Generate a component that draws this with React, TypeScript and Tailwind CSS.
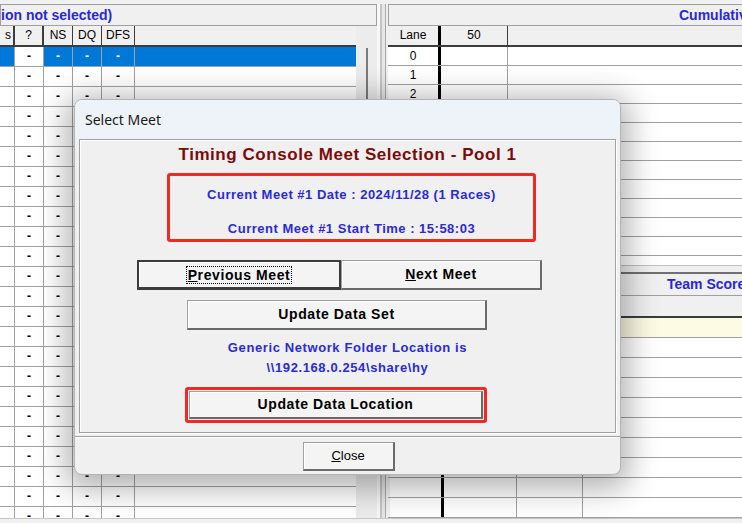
import React from "react"

const sans = "font-['Liberation_Sans',Arial,sans-serif]"

const leftRows = Array.from({ length: 24 }, (_, i) => i)
const laneRows = Array.from({ length: 12 }, (_, i) => i)
const teamRows = Array.from({ length: 9 }, (_, i) => i)

function Btn({
  children,
  def,
  className = "",
}: {
  children: React.ReactNode
  def?: boolean
  className?: string
}) {
  return (
    <div
      className={
        "flex items-center justify-center bg-[#f4f4f4] text-[14px] font-bold tracking-[0.6px] text-black " +
        (def
          ? "border-2 border-[#3c3c3c] border-b-[3px] shadow-[inset_1px_1px_0_#fff] "
          : "border border-[#a0a0a0] border-b-2 border-r-2 border-b-[#6a6a6a] border-r-[#6a6a6a] shadow-[inset_1px_1px_0_#fff] ") +
        className
      }
    >
      {children}
    </div>
  )
}

export default function App() {
  return (
    <div className={`relative w-[742px] h-[523px] overflow-hidden bg-[#f0f0f0] ${sans}`}>
      <div className="flex h-[518px] pt-[4px]">
        {/* left panel */}
        <div className="w-[377px] shrink-0 flex flex-col">
          <div className="h-[22px] border border-[#a0a0a0] bg-[#f0f0f0] text-[14px] font-bold text-[#2828d8] leading-[20px] whitespace-nowrap overflow-hidden">
            ion not selected)
          </div>
          <div className="flex flex-1 overflow-hidden">
            <div className="w-[356px] flex flex-col overflow-hidden">
              <div className="grid grid-cols-[15px_29px_29px_29px_33px_1fr] h-[21px] shrink-0 bg-[#f0f0f0] border-b-2 border-[#3c3c3c] text-[12px] text-black leading-[19px] text-center">
                <div className="border-r-2 border-[#3c3c3c] text-right pr-[2px]">s</div>
                <div className="border-r-2 border-[#3c3c3c]">?</div>
                <div className="border-r border-[#3c3c3c]">NS</div>
                <div className="border-r border-[#3c3c3c]">DQ</div>
                <div className="border-r border-[#3c3c3c]">DFS</div>
                <div />
              </div>
              {leftRows.map((i) => {
                const sel = i === 0
                const cell = sel
                  ? "bg-[#0078d7] text-white border-r border-[#a0a0a0]"
                  : "bg-white text-black border-r border-[#a0a0a0]"
                return (
                  <div
                    key={i}
                    className="grid grid-cols-[15px_29px_29px_29px_33px_1fr] h-[20px] shrink-0 border-b border-[#a0a0a0] text-[12px] font-bold leading-[19px] text-center"
                  >
                    <div className={cell} />
                    <div className="bg-white text-black border-r border-[#a0a0a0]">-</div>
                    <div className={cell}>-</div>
                    <div className={cell}>-</div>
                    <div className={cell}>-</div>
                    <div className={sel ? "bg-[#0078d7]" : "bg-white"} />
                  </div>
                )
              })}
            </div>
            <div className="flex-1 bg-[#ececec] pl-[10px] pt-[22px]">
              <div className="w-[2px] h-[60px] bg-[#7a7a7a]" />
            </div>
          </div>
        </div>

        {/* splitter */}
        <div className="w-[11px] shrink-0 flex">
          <div className="w-[3px] bg-[#f7f7f7]" />
          <div className="w-[2px] bg-[#c4c4c4]" />
          <div className="w-[3px] bg-[#e6e6e6]" />
          <div className="w-[3px] border-l border-[#a8a8a8]" />
        </div>

        {/* right panel */}
        <div className="flex-1 min-w-0 flex flex-col">
          <div className="h-[22px] border border-[#a0a0a0] border-r-0 bg-[#f0f0f0] pl-[290px] text-[14px] font-bold text-[#2828d8] leading-[20px] whitespace-nowrap overflow-hidden">
            Cumulative Split Times
          </div>
          <div className="h-[239px] overflow-hidden flex flex-col">
            <div className="grid grid-cols-[53px_67px_1fr] h-[21px] shrink-0 bg-[#f0f0f0] border-b-2 border-[#3c3c3c] text-[12px] text-black leading-[19px] text-center">
              <div className="border-r-[3px] border-black">Lane</div>
              <div className="border-r border-[#3c3c3c]">50</div>
              <div />
            </div>
            {laneRows.map((i) => (
              <div
                key={i}
                className="grid grid-cols-[53px_67px_1fr] h-[19px] shrink-0 bg-white border-b border-[#a0a0a0] text-[12px] text-black leading-[18px] text-center"
              >
                <div className="border-r-[3px] border-black">{i}</div>
                <div className="border-r border-[#a0a0a0]" />
                <div />
              </div>
            ))}
          </div>
          <div className="h-[9px] shrink-0 border-t border-[#c0c0c0] border-b-2 border-b-[#707070] bg-[#f0f0f0]" />
          <div className="h-[22px] shrink-0 bg-[#f0f0f0] border-b border-[#a0a0a0] pl-[279px] text-[14px] font-bold text-[#2828d8] leading-[21px] whitespace-nowrap overflow-hidden">
            Team Scores
          </div>
          <div className="flex-1 overflow-hidden flex flex-col">
            <div className="grid grid-cols-[2px_54px_73px_66px_1fr] h-[22px] shrink-0 bg-[#f0f0f0] border-b-2 border-[#3c3c3c]">
              <div />
              <div className="border-r-[3px] border-black" />
              <div className="border-r border-[#a0a0a0]" />
              <div className="border-r border-[#a0a0a0]" />
              <div />
            </div>
            <div className="grid grid-cols-[2px_54px_73px_66px_1fr] h-[20px] shrink-0 bg-[#fdfbe3] border-b border-[#a0a0a0]">
              <div />
              <div className="border-r-[3px] border-black" />
              <div className="border-r border-[#a0a0a0]" />
              <div className="border-r border-[#a0a0a0]" />
              <div />
            </div>
            {teamRows.map((i) => (
              <div
                key={i}
                className="grid grid-cols-[2px_54px_73px_66px_1fr] h-[20px] shrink-0 bg-white border-b border-[#a0a0a0]"
              >
                <div className="bg-[#f0f0f0]" />
                <div className="border-r-[3px] border-black" />
                <div className="border-r border-[#a0a0a0]" />
                <div className="border-r border-[#a0a0a0]" />
                <div />
              </div>
            ))}
          </div>
        </div>
      </div>
      <div className="h-[5px] border-t border-[#c8c8c8]" />

      {/* dialog */}
      <div className="absolute left-[74px] top-[99px] w-[547px] h-[376px] rounded-[8px] overflow-hidden border border-[#b4b4b4] bg-[#f0f0f0] shadow-[0_6px_30px_8px_rgba(0,0,0,0.3)] flex flex-col">
        <div className="h-[38px] shrink-0 bg-[#eef3f9] pl-[10px] flex items-center font-['Noto_Sans',sans-serif] text-[14px] text-[#1a1a1a]">
          Select Meet
        </div>
        <div className="mt-[1px] mx-[4px] h-[294px] shrink-0 border border-[#a0a0a0] shadow-[inset_1px_1px_0_#fff,1px_1px_0_#fff] flex flex-col">
          <div className="mt-[5px] h-[20px] leading-[20px] text-center text-[17px] font-bold tracking-[0.55px] text-[#7d0a0a]">
            Timing Console Meet Selection - Pool 1
          </div>
          <div className="mt-[8px] ml-[87px] w-[369px] h-[69px] border-[3px] border-[#ee2a22] rounded-[3px] flex flex-col items-center text-[13px] font-bold tracking-[0.5px] text-[#2a2ad6] leading-[17px]">
            <div className="mt-[10px]">Current Meet #1 Date : 2024/11/28 (1 Races)</div>
            <div className="mt-[17px]">Current Meet #1 Start Time : 15:58:03</div>
          </div>
          <div className="mt-[18px] ml-[57px] flex">
            <Btn def className="w-[204px] h-[30px]">
              <span className="border border-dotted border-black px-[1px] leading-[16px]">
                <span className="underline">P</span>revious Meet
              </span>
            </Btn>
            <Btn className="w-[201px] h-[30px]">
              <span>
                <span className="underline">N</span>ext Meet
              </span>
            </Btn>
          </div>
          <Btn className="mt-[10px] ml-[107px] w-[300px] h-[30px]">Update Data Set</Btn>
          <div className="mt-[8px] text-center text-[13px] font-bold tracking-[0.6px] text-[#2a2ad6] leading-[20px]">
            <div>Generic Network Folder Location is</div>
            <div>\\192.168.0.254\share\hy</div>
          </div>
          <div className="mt-[9px] ml-[105px] w-[302px] h-[36px] border-[3px] border-[#ee2a22] rounded-[3px] p-[1px]">
            <Btn className="w-full h-full">Update Data Location</Btn>
          </div>
        </div>
        <div className="mt-[3px] flex-1 border-t border-[#a0a0a0] shadow-[inset_0_1px_0_#fff] flex justify-center pl-[2px]">
          <div className="mt-[5px] w-[92px] h-[29px] bg-[#f4f4f4] border border-[#a0a0a0] border-b-2 border-r-2 border-b-[#6a6a6a] border-r-[#6a6a6a] shadow-[inset_1px_1px_0_#fff] flex items-center justify-center text-[13px] text-black">
            <span>
              <span className="underline">C</span>lose
            </span>
          </div>
        </div>
      </div>
    </div>
  )
}
